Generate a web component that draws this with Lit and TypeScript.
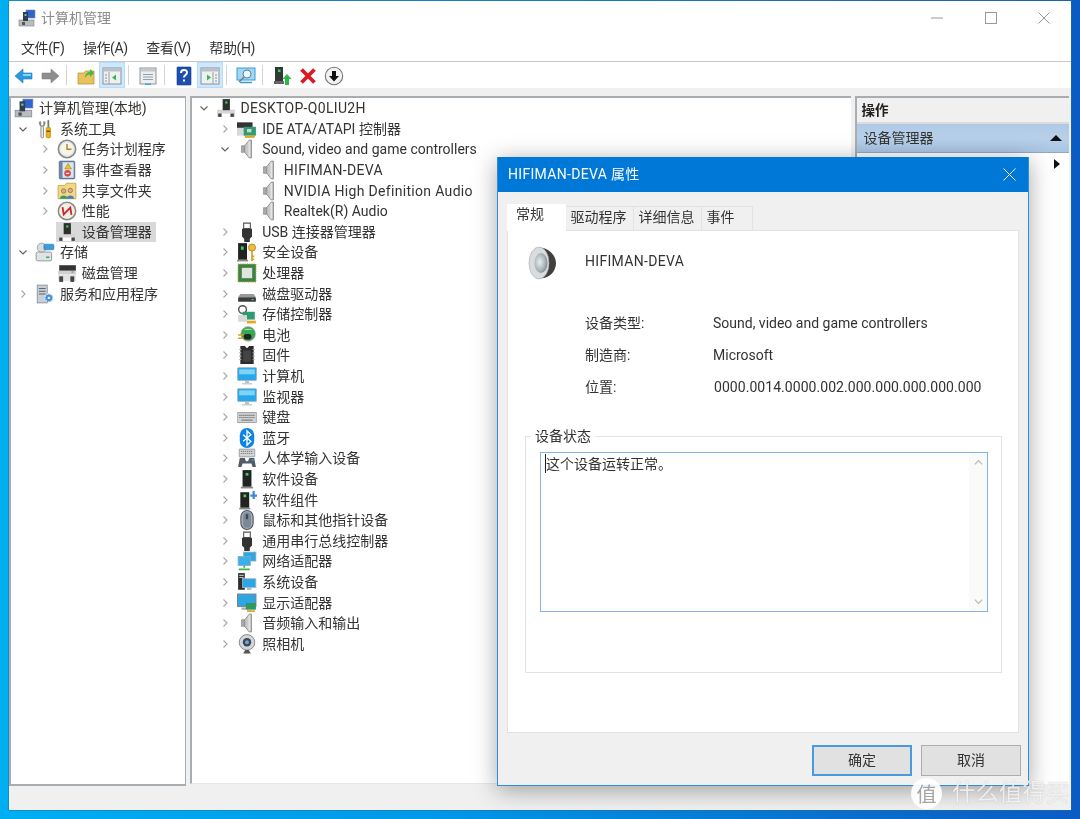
import { LitElement, html, css, svg, TemplateResult } from "lit";
import { customElement } from "lit/decorators.js";

const speaker = svg`<path d="M4 6h3v6H4z" fill="#a8a8a8" stroke="#8c8c8c" stroke-width=".6"/><path d="M7 6l4-5h2v16h-2l-4-5z" fill="#c9c9c9" stroke="#8a8a8a" stroke-width=".8"/><path d="M11 2v14" stroke="#efefef"/>`;
const tower = svg`<rect x="6" y="1" width="6.500" height="10" fill="#2f2f2f"/><rect x="8.300" y="3" width="2" height="2" fill="#38d060"/>`;
const screen = svg`<rect x="0.500" y="1.500" width="17" height="11.500" rx=".6" fill="#27a7e8" stroke="#9fb6c6" stroke-width=".8"/><rect x="2" y="3" width="14" height="4.500" fill="#7fd3f6"/><path d="M7.500 13.500h3l.5 2h-4z" fill="#b9c2c8"/><path d="M4.500 16h9" stroke="#c3c9cc" stroke-width="1.200"/>`;

const I: Record<string, TemplateResult> = {
  mgmt: svg`<rect x="1" y="11" width="15" height="6" fill="#b8bcc0" stroke="#7d8286" stroke-width=".6"/><rect x="4" y="13" width="3" height="3" fill="#555"/><rect x="8" y="1" width="9" height="8" fill="#2f63d0" stroke="#7a8aa0" stroke-width=".6"/><rect x="5" y="3" width="5" height="9" fill="#333c50"/><rect x="6.500" y="5" width="2" height="2" fill="#55d0a0"/>`,
  tools: svg`<path d="M5 2v3.500M8 2v3.500M4 2.500c0 3 1 4 2.500 4S9 5.500 9 2.500" fill="none" stroke="#8a8a8a" stroke-width="1.100"/><rect x="5.300" y="6.500" width="2.400" height="10.500" rx="1" fill="#e8e8e8" stroke="#777" stroke-width=".7"/><rect x="11.200" y="1" width="1.600" height="6.500" fill="#777"/><rect x="10" y="7.500" width="4" height="9.500" rx="1.400" fill="#efb010" stroke="#a07000" stroke-width=".5"/><path d="M10.500 11h3" stroke="#4a3a00"/>`,
  clock: svg`<circle cx="9" cy="9" r="7.800" fill="#e8e6da" stroke="#7f8a94" stroke-width="1.400"/><circle cx="9" cy="9" r="5.800" fill="#f8f5e6"/><path d="M9 4.500V9.300h4" fill="none" stroke="#a88a30" stroke-width="1.300"/>`,
  event: svg`<rect x="2" y="1" width="14" height="16" rx="1" fill="#6d86ad" stroke="#4b5f80" stroke-width=".6"/><rect x="5" y="2" width="10" height="14" fill="#dde5ee"/><path d="M10 3l3 5H7z" fill="#f0c020" stroke="#8a6a10" stroke-width=".4"/><circle cx="9.500" cy="12" r="3" fill="#d84a4a"/><path d="M8 12h3" stroke="#fff"/>`,
  share: svg`<path d="M1 4h6l1.500-2H17v14H1z" fill="#f3d884" stroke="#bf9c3e" stroke-width=".7"/><circle cx="6" cy="9" r="2" fill="#e2b080" stroke="#555" stroke-width=".5"/><path d="M2.500 16c0-4 7-4 7 0z" fill="#3c9a5a"/><circle cx="12" cy="8.500" r="2" fill="#e2b080" stroke="#555" stroke-width=".5"/><path d="M8.500 16c0-4 7-4 7 0z" fill="#4a7ec0"/>`,
  perf: svg`<circle cx="9" cy="9" r="7.800" fill="#f0efe6" stroke="#8a8a84" stroke-width="1.400"/><path d="M5 5.500l1 6.500 6-6 1 6.500" fill="none" stroke="#d02028" stroke-width="1.600"/>`,
  devmgr: svg`<path d="M1 10.500h16v6.500H1z" fill="#d6d6d6"/><path d="M4 17v-3h10v3" fill="#fff"/><rect x="2" y="14" width="3" height="3" fill="#444"/><rect x="13" y="14" width="3" height="3" fill="#444"/>${tower}`,
  storage: svg`<rect x="1" y="9" width="14" height="8" rx="1.500" fill="#dfe3e6" stroke="#7d858c" stroke-width=".7"/><rect x="10" y="13" width="3" height="1.500" fill="#40b060"/><circle cx="6" cy="5" r="4" fill="#d8dcdc" stroke="#808890" stroke-width=".6"/><rect x="8" y="2" width="9" height="5" rx="1" fill="#3d9ae0" stroke="#2b6ea0" stroke-width=".5"/>`,
  disk: svg`<rect x="2" y="2" width="15" height="5" fill="#333"/><path d="M1 7h16v3H1z" fill="#cfcfcf"/><path d="M1 10h16v6H1z" fill="#e3e3e3"/><rect x="2" y="12" width="3.500" height="5" fill="#444"/><rect x="12" y="12" width="3.500" height="5" fill="#444"/><rect x="13" y="7.500" width="2" height="1.200" fill="#40c060"/>`,
  services: svg`<rect x="2" y="1" width="9" height="16" fill="#c9cfd6" stroke="#7f8890" stroke-width=".7"/><path d="M3.500 4h6M3.500 6.500h6M3.500 9h6" stroke="#5a6670"/><circle cx="12.500" cy="12.500" r="3.600" fill="#4a90d0" stroke="#d5e6f5" stroke-width="1.200" stroke-dasharray="1.600 .8"/><circle cx="12.500" cy="12.500" r="1.100" fill="#eef"/>`,
  ide: svg`<path d="M0 3h14v5H0z" fill="#333"/><path d="M0 8h8v7H0z" fill="#d8d8d8"/><rect x="6" y="7" width="11" height="8" fill="#2f9a74"/><rect x="9" y="9" width="4" height="3" fill="#b8e0c8"/><path d="M7 15h9v2H7z" fill="#e0a820"/>`,
  speaker,
  usb: svg`<path d="M6 1h6v5H6z" fill="none" stroke="#555"/><path d="M4.500 6h9v7l-2 2v3h-5v-3l-2-2z" fill="#333"/>`,
  security: svg`<rect x="1" y="1" width="8" height="15" fill="#222"/><rect x="3.500" y="4" width="2.500" height="3" fill="#38d060"/><path d="M0 16h10v1.500H0z" fill="#888"/><circle cx="13.500" cy="5" r="3.200" fill="#efb93a" stroke="#a37c18" stroke-width=".7"/><path d="M13.500 8v9M13.500 13h2M13.500 15.500h2" stroke="#d69e20" stroke-width="1.500"/>`,
  cpu: svg`<rect x="1" y="1" width="16" height="16" fill="#2f8a3f"/><rect x="1" y="1" width="16" height="16" fill="none" stroke="#b08c28" stroke-width="1" stroke-dasharray="1 1"/><rect x="4" y="4" width="10" height="10" fill="#dfe6da" stroke="#666" stroke-width=".6"/>`,
  drive: svg`<path d="M3 9h12l2 3H1z" fill="#9a9a9a"/><rect x="1" y="12" width="16" height="4" rx=".8" fill="#3c3c3c"/><rect x="13" y="13.500" width="2" height="1" fill="#40d060"/>`,
  storctl: svg`<circle cx="5" cy="5" r="3.500" fill="none" stroke="#555" stroke-width="1.300"/><path d="M7 7l8 3" stroke="#555"/><rect x="5" y="7" width="11" height="7" fill="#2e9a70"/><rect x="1" y="10" width="8" height="6" fill="#d8d8d8"/><path d="M9 15h8v2.500H9z" fill="#e8a820"/>`,
  battery: svg`<circle cx="10" cy="8" r="6.500" fill="#34a853" stroke="#999" stroke-width=".7"/><path d="M6 4.500a5 3 0 018 0z" fill="#a8e0b0"/><rect x="6" y="8" width="7" height="5" rx="2.400" fill="#222"/><path d="M1 9h5M1 12h5" stroke="#d8a020" stroke-width="1.300"/>`,
  firmware: svg`<path d="M3 1h4l2 2 2-2h4v16H3z" fill="#2c2c2c"/><path d="M2 4h2M2 7h2M2 10h2M2 13h2M14 4h2M14 7h2M14 10h2M14 13h2" stroke="#aaa"/><rect x="5.500" y="5" width="7" height="10" fill="#444"/>`,
  computer: screen,
  monitor: screen,
  keyboard: svg`<rect x="0" y="5" width="18" height="9" rx="1" fill="#cfd2d4" stroke="#8c9094" stroke-width=".7"/><path d="M2 7.500h14M2 9.500h14" stroke="#777" stroke-dasharray="1.200 .6"/><path d="M4 11.800h10" stroke="#888" stroke-width="1.200"/>`,
  bt: svg`<rect x="2.500" y="0" width="13" height="18" rx="6.500" fill="#0a84e8"/><path d="M5.500 6l7 6-3.500 3.500v-13L12.500 6l-7 6" fill="none" stroke="#fff" stroke-width="1.200"/>`,
  hid: svg`<rect x="2" y="1" width="14" height="7" rx=".6" fill="#d2d4d6" stroke="#808488" stroke-width=".6"/><path d="M3.500 3h11M3.500 5h11" stroke="#888" stroke-dasharray="1.200 .6"/><path d="M1 17l1.500-8h4.500l1 3h2l1-3h4.500l1.500 8h-3l-1-3H5l-1 3z" fill="#515a66"/><circle cx="14" cy="11" r="1" fill="#3a8ad8"/>`,
  softdev: svg`<rect x="5" y="1" width="8" height="15" fill="#222"/><rect x="7.800" y="3.500" width="2.500" height="2.500" fill="#38d060"/><path d="M3.500 16h11v1.500h-11z" fill="#888"/>`,
  softcomp: svg`<rect x="3" y="2" width="8" height="14" fill="#222"/><rect x="5.800" y="4" width="2.500" height="2.500" fill="#38d060"/><path d="M2 16h10v1.500H2z" fill="#888"/><path d="M12 4h2V1h2v3h2v2h-2v2h-2V6h-2z" fill="#3a8ad8"/>`,
  mouse: svg`<rect x="3.500" y="0.500" width="11" height="17" rx="5.500" fill="#a5aeb8" stroke="#4d5560" stroke-width="1"/><rect x="5.500" y="2" width="7" height="14" rx="3.500" fill="#7d8896"/><rect x="8" y="3.500" width="2" height="5" rx="1" fill="#3c4654"/>`,
  net: svg`<rect x="6" y="1" width="11" height="8" fill="#2ea6e6" stroke="#8fa8b8" stroke-width=".7"/><rect x="1" y="5" width="11" height="8" fill="#36b0ee" stroke="#8fa8b8" stroke-width=".7"/><path d="M6.500 13v2M1.500 16.500h10" stroke="#45b14e" stroke-width="1.600"/>`,
  sysdev: svg`<rect x="1" y="1" width="6" height="15" fill="#2d2d2d"/><path d="M2 3h4M2 5h4" stroke="#bbb"/><rect x="5" y="6" width="12" height="8" fill="#2ea6e6" stroke="#a0bccc" stroke-width=".7"/><path d="M9 14.500h4v1.500H9z" fill="#aaa"/>`,
  display: svg`<rect x="0.500" y="1" width="16.500" height="11" fill="#2ea6e6" stroke="#6d8494" stroke-width="1"/><path d="M4 13h5v2H4z" fill="#aaa"/><rect x="8" y="9" width="9" height="6" fill="#2e9a60"/><path d="M9 15.500h7v1.500H9z" fill="#d8a020"/>`,
  camera: svg`<circle cx="9" cy="7.500" r="7" fill="#d4d6d8" stroke="#7b7f84" stroke-width=".8"/><circle cx="9" cy="7.500" r="3.800" fill="#3a4658"/><circle cx="9" cy="7.500" r="1.800" fill="#7aa0d0"/><path d="M7.500 14.500h3l2 3h-7z" fill="#555"/>`,
};

const ico = (n: string) => html`<svg class="ic" viewBox="0 0 18 18">${I[n]}</svg>`;

type Row = { t: string; i: string; l: number; c?: "r" | "d"; sel?: boolean; wide?: boolean };

const LEFT: Row[] = [
  { t: "计算机管理(本地)", i: "mgmt", l: -1 },
  { t: "系统工具", i: "tools", l: 0, c: "d" },
  { t: "任务计划程序", i: "clock", l: 1, c: "r" },
  { t: "事件查看器", i: "event", l: 1, c: "r" },
  { t: "共享文件夹", i: "share", l: 1, c: "r" },
  { t: "性能", i: "perf", l: 1, c: "r" },
  { t: "设备管理器", i: "devmgr", l: 1, sel: true },
  { t: "存储", i: "storage", l: 0, c: "d" },
  { t: "磁盘管理", i: "disk", l: 1 },
  { t: "服务和应用程序", i: "services", l: 0, c: "r" },
];

const MID: Row[] = [
  { t: "DESKTOP-Q0LIU2H", i: "devmgr", l: 0, c: "d", wide: true },
  { t: "IDE ATA/ATAPI 控制器", i: "ide", l: 1, c: "r" },
  { t: "Sound, video and game controllers", i: "speaker", l: 1, c: "d" },
  { t: "HIFIMAN-DEVA", i: "speaker", l: 2, wide: true },
  { t: "NVIDIA High Definition Audio", i: "speaker", l: 2, wide: true },
  { t: "Realtek(R) Audio", i: "speaker", l: 2 },
  { t: "USB 连接器管理器", i: "usb", l: 1, c: "r" },
  { t: "安全设备", i: "security", l: 1, c: "r" },
  { t: "处理器", i: "cpu", l: 1, c: "r" },
  { t: "磁盘驱动器", i: "drive", l: 1, c: "r" },
  { t: "存储控制器", i: "storctl", l: 1, c: "r" },
  { t: "电池", i: "battery", l: 1, c: "r" },
  { t: "固件", i: "firmware", l: 1, c: "r" },
  { t: "计算机", i: "computer", l: 1, c: "r" },
  { t: "监视器", i: "monitor", l: 1, c: "r" },
  { t: "键盘", i: "keyboard", l: 1, c: "r" },
  { t: "蓝牙", i: "bt", l: 1, c: "r" },
  { t: "人体学输入设备", i: "hid", l: 1, c: "r" },
  { t: "软件设备", i: "softdev", l: 1, c: "r" },
  { t: "软件组件", i: "softcomp", l: 1, c: "r" },
  { t: "鼠标和其他指针设备", i: "mouse", l: 1, c: "r" },
  { t: "通用串行总线控制器", i: "usb", l: 1, c: "r" },
  { t: "网络适配器", i: "net", l: 1, c: "r" },
  { t: "系统设备", i: "sysdev", l: 1, c: "r" },
  { t: "显示适配器", i: "display", l: 1, c: "r" },
  { t: "音频输入和输出", i: "speaker", l: 1, c: "r" },
  { t: "照相机", i: "camera", l: 1, c: "r" },
];

const chevron = (c?: "r" | "d") =>
  html`<span class="chev">${c === "r"
    ? html`<svg viewBox="0 0 10 10"><path d="M3.500 1.500L7 5 3.500 8.500" fill="none" stroke="#a6a6a6" stroke-width="1.100"/></svg>`
    : c === "d"
    ? html`<svg viewBox="0 0 10 10"><path d="M1.500 3.500L5 7l3.500-3.500" fill="none" stroke="#606060" stroke-width="1.100"/></svg>`
    : ""}</span>`;

const tool = (n: TemplateResult, hl = false) =>
  html`<span class="tb ${hl ? "hl" : ""}"><svg viewBox="0 0 20 20">${n}</svg></span>`;

const paneIcon = (fill: string, left: boolean) => svg`<rect x="1" y="2" width="18" height="16" fill="#eef1f3" stroke="#8a9096"/><rect x="1.500" y="2.500" width="17" height="3" fill="#b9c0c6"/><path d="${left ? "M7 6v12" : "M13 6v12"}" stroke="#9aa0a6"/><path d="${left ? "M3 9h2M3 12h2M3 15h2" : "M15 9h2M15 12h2M15 15h2"}" stroke="#8a9096"/><path d="${left ? "M14 8.500v6l-4-3z" : "M7 8.500v6l4-3z"}" fill="${fill}"/>`;

@customElement("app-root")
export class AppRoot extends LitElement {
  static styles = css`
    :host {
      display: block;
      position: relative;
      width: 1080px;
      height: 819px;
      overflow: hidden;
      padding: 1px 9px 9px;
      box-sizing: border-box;
      background: linear-gradient(90deg, #00aff2 0%, #0098e8 40%, #0a6ecb 80%, #0a5cc4 100%);
      font: 14px/20px Roboto, "Noto Sans CJK SC", sans-serif;
      color: #333;
      filter: blur(0.4px);
    }
    .win {
      position: relative;
      height: 100%;
      background: #f0f0f0;
      display: flex;
      flex-direction: column;
      box-shadow: 0 0 0 0.5px #2b6a9c;
    }
    .title {
      height: 35px;
      flex: none;
      background: #fff;
      display: flex;
      align-items: center;
      padding: 0 0 2px 9px;
      box-sizing: border-box;
      color: #8c8c8c;
      gap: 5px;
    }
    .title .ic { width: 18px; height: 18px; }
    .spacer { flex: 1; }
    .ctls { display: flex; margin-top: 1px; }
    .ctl { width: 53.500px; height: 30px; display: flex; align-items: center; justify-content: center; }
    .ctl svg { width: 12px; height: 12px; }
    .menu {
      flex: none;
      background: #fff;
      display: flex;
      padding: 0 0 2px 12px;
      box-sizing: content-box;
      height: 23px;
      gap: 18.500px;
      letter-spacing: -0.4px;
      align-items: center;
      border-bottom: 1.500px solid #c8c8c8;
      color: #333;
    }
    .toolbar {
      height: 26px;
      flex: none;
      background: #fff;
      display: flex;
      padding-left: 2px;
    }
    .tb { width: 26px; height: 26px; display: flex; align-items: center; justify-content: center; box-sizing: border-box; }
    .tb svg { width: 20px; height: 20px; margin-top: 1px; }
    .tb.hl { background: #cce8ff; border: 1px solid #b5dcfb; }
    .sep { width: 10px; flex: none; display: flex; }
    .sep::before { content: ""; width: 1px; height: 20px; margin: 3px 0 0 3px; background: #d4d4d4; }
    .strip { height: 8px; flex: none; background: #f0f0f0; }
    .panes { flex: 1; min-height: 0; display: flex; background: #f0f0f0; }
    .pane { background: #fff; border: 2px solid #a8adb2; overflow: hidden; box-sizing: border-box; }
    .pane.l { width: 176.500px; border-right-width: 1.500px; }
    .pane.m { width: 661px; margin-left: 4px; border-right: 0; border-bottom: 1px solid #e6e6e6; margin-bottom: 1.500px; }
    .pane.r { flex: 1; margin-left: 4px; border-right: 0; border-bottom: 0; margin-right: 2px; margin-bottom: 1.500px; }
    .row { height: 20.600px; display: flex; align-items: center; white-space: nowrap; }
    .wide { letter-spacing: 0.32px; }
    .chev { width: 12px; height: 12px; margin-right: 6px; flex: none; display: flex; align-items: center; justify-content: center; }
    .chev svg { width: 10px; height: 10px; }
    .cell { display: flex; align-items: center; gap: 5px; height: 20px; padding-right: 4px; margin-left: -1px; padding-left: 1px; }
    .cell.sel { background: #d9d9d9; }
    .ic { width: 20px; height: 20px; flex: none; }
    .pl0 { padding-left: 6px; }
    .pl1 { padding-left: 27.700px; }
    .pl2 { padding-left: 49.300px; }
    .root { padding-left: 3px; }
    .root .cell { margin: 0; padding: 0; }
    .ac-h { font-weight: 700; padding-left: 5px; display: flex; align-items: center; background: #f0f0f0; border-bottom: 2px solid #dcdcdc; color: #222; box-sizing: border-box; height: 26px; font-size: 13.500px; }
    .ac-t { height: 29px; display: flex; align-items: center; justify-content: space-between; padding: 0 5px 0 7px; background: linear-gradient(#afc9e5, #b8d0e9 50%, #a9c5e3); color: #333; border-bottom: 1px solid #8fa9c4; box-sizing: border-box; }
    .up { width: 0; height: 0; border: 6px solid transparent; border-top: 0; border-bottom: 6px solid #111; margin-right: 2px; }
    .ac-r { height: 22px; display: flex; align-items: center; justify-content: flex-end; padding-right: 9px; }
    .rt { width: 0; height: 0; border: 5px solid transparent; border-right: 0; border-left: 6px solid #111; }
    .status { height: 24.500px; flex: none; background: #f0f0f0; }
    .dlg {
      position: absolute;
      left: 488px;
      top: 155.500px;
      width: 532px;
      height: 629px;
      box-sizing: border-box;
      background: #f0f0f0;
      border: 1px solid #2f8ddc;
      border-top: 0;
      box-shadow: 0 4px 22px rgba(0, 0, 0, 0.35);
      display: flex;
      flex-direction: column;
    }
    .d-title { height: 35px; flex: none; background: #0078d7; color: #fff; display: flex; align-items: center; padding: 0 12px 0 10px; justify-content: space-between; }
    .d-title svg { width: 13px; height: 13px; }
    .tabs { display: flex; margin: 12px 0 0 9px; height: 26px; align-items: flex-end; white-space: nowrap; }
    .tab { height: 24px; display: flex; align-items: center; border: 1px solid #e2e2e2; border-bottom: 0; border-left: 0; box-sizing: border-box; width: 68px; padding: 0 0 2px 4.500px; }
    .tab.on { height: 27px; width: 59px; background: #fff; padding: 0 0 6px 9px; border: 0; margin-bottom: -1px; position: relative; }
    .tab.ev { width: 51px; }
    .d-body { margin: 0 9px; height: 503px; flex: none; background: #fff; border: 1px solid #e2e2e2; box-sizing: border-box; padding: 15px 17px 0; }
    .d-head { display: flex; height: 30px; align-items: center; gap: 27px; padding-left: 3px; }
    .d-head svg { width: 30px; height: 36px; margin-top: 4px; flex: none; }
    .grid { display: grid; grid-template-columns: 128px 1fr; row-gap: 12px; margin: 37px 0 0 60px; }
    .grid span:nth-child(6) { padding-left: 1px; letter-spacing: 0.05px; }
    .group { margin-top: 39px; width: 477px; height: 237px; box-sizing: border-box; border: 1px solid #e2e2e2; padding: 0 13px 0 14px; }
    .legend { margin: -11px 0 0 -9px; width: fit-content; padding: 0 4px; background: #fff; height: 20px; }
    .ta { margin-top: 6px; height: 160px; box-sizing: border-box; border: 1px solid #83b5e6; padding: 1px 4px; display: flex; justify-content: space-between; }
    .txt { border-left: 1px solid #222; height: 19px; padding-left: 0; line-height: 20px; }
    .sb { width: 18px; margin: -1px -4px -1px 0; display: flex; flex-direction: column; justify-content: space-between; align-items: center; padding: 5px 0; box-sizing: border-box; background: #fafafa; }
    .sb svg { width: 9px; height: 9px; }
    .btns { display: flex; gap: 9px; justify-content: flex-end; margin: 12px 7px 0 0; }
    .btn { width: 100px; height: 31px; box-sizing: border-box; background: #e1e1e1; border: 1px solid #adadad; display: flex; align-items: center; justify-content: center; }
    .btn.def { border: 2px solid #4a9ae0; }
    .wm { position: absolute; left: 911px; top: 777px; display: flex; align-items: center; gap: 10px; color: rgba(255, 255, 255, 0.8); font-size: 23.500px; line-height: 32px; text-shadow: 0 0 1px rgba(120, 120, 120, 0.5); }
    .wm i { width: 31px; height: 31px; border-radius: 50%; background: rgba(255, 255, 255, 0.92); color: #a5a5a5; font: 20px/31px "Noto Sans CJK SC", sans-serif; text-align: center; text-shadow: none; }
  `;

  row(r: Row) {
    if (r.l < 0)
      return html`<div class="row root"><span class="cell">${ico(r.i)}<span>${r.t}</span></span></div>`;
    return html`<div class="row pl${r.l}">${chevron(r.c)}<span class="cell ${r.sel ? "sel" : ""}">${ico(r.i)}<span class="${r.wide ? "wide" : ""}">${r.t}</span></span></div>`;
  }

  render() {
    return html`
      <div class="win">
        <div class="title">
          ${ico("mgmt")}<span>计算机管理</span><span class="spacer"></span>
          <span class="ctls">
            <span class="ctl"><svg viewBox="0 0 12 12"><path d="M0 6h12" stroke="#aaa" stroke-width="1.200"/></svg></span>
            <span class="ctl"><svg viewBox="0 0 12 12"><rect x=".5" y=".5" width="11" height="11" fill="none" stroke="#999" stroke-width="1"/></svg></span>
            <span class="ctl"><svg viewBox="0 0 12 12"><path d="M.5.5l11 11M11.500.5l-11 11" stroke="#999" stroke-width="1"/></svg></span>
          </span>
        </div>
        <div class="menu"><span>文件(F)</span><span>操作(A)</span><span>查看(V)</span><span>帮助(H)</span></div>
        <div class="toolbar">
          ${tool(svg`<path d="M1 10l8-7v4h9v6H9v4z" fill="#2a9ae0" stroke="#1d78b8" stroke-width=".6"/><path d="M9 8h8v2H9z" fill="#8cd0f4"/>`)}
          ${tool(svg`<path d="M19 10l-8-7v4H2v6h9v4z" fill="#8e8e8e" stroke="#777" stroke-width=".5"/>`)}
          <span class="sep"></span>
          ${tool(svg`<path d="M2 7h6l1.500-2H18v13H2z" fill="#e8c25a" stroke="#b08e30" stroke-width=".7"/><path d="M9 12c0-5 3-6 5-6V3l4 4-4 4V8.500c-2 0-4 1-5 3.500z" fill="#46b648"/>`)}
          ${tool(paneIcon("#3db54a", true), true)}
          <span class="sep"></span>
          ${tool(svg`<rect x="2" y="2" width="16" height="16" fill="#eceef0" stroke="#8d9398"/><rect x="3" y="3" width="14" height="2.500" fill="#c2c8cc"/><path d="M5 8.500h10M5 11h10M5 13.500h10" stroke="#8fa2b0"/><path d="M7 17.500h6v1.500H7z" fill="#3ca6e4"/>`)}
          <span class="sep"></span>
          <span class="tb"><svg viewBox="0 0 20 20"><rect x="3" y="1" width="14" height="18" rx=".6" fill="#1d4fb0" stroke="#123a80" stroke-width=".6"/><path d="M7 7c0-4 6-4 6-.5 0 2.500-3 2.500-3 5M10 13.500v2" fill="none" stroke="#fff" stroke-width="2"/></svg></span>
          ${tool(paneIcon("#3db54a", false), true)}
          <span class="sep"></span>
          ${tool(svg`<rect x="1" y="2" width="18" height="12" fill="#9fd8f4" stroke="#3a9ad8"/><circle cx="11" cy="8" r="4" fill="#e8f6fd" stroke="#6a7f8e"/><path d="M8 11l-5 5" stroke="#6a7f8e" stroke-width="1.600"/><path d="M4 16.500h12" stroke="#3a9ad8" stroke-width="1.500"/>`)}
          <span class="sep"></span>
          ${tool(svg`<rect x="3" y="1" width="8" height="14" fill="#2f3a36"/><rect x="6" y="3.500" width="2.500" height="2.500" fill="#38d060"/><path d="M2 15h10v3H2z" fill="#666"/><path d="M15 8l4.500 5H17v6h-4v-6h-2.500z" fill="#2eb84a"/>`)}
          ${tool(svg`<path d="M3.500 3.500l13 13M16.500 3.500l-13 13" stroke="#dc1a22" stroke-width="3.800"/>`)}
          ${tool(svg`<circle cx="10" cy="10" r="8.700" fill="#f2f2f2" stroke="#777" stroke-width="1.100"/><path d="M10 15.500L5 10h3V5h4v5h3z" fill="#111"/>`)}
        </div>
        <div class="strip"></div>
        <div class="panes">
          <div class="pane l">${LEFT.map((r) => this.row(r))}</div>
          <div class="pane m">${MID.map((r) => this.row(r))}</div>
          <div class="pane r">
            <div class="ac-h">操作</div>
            <div class="ac-t"><span>设备管理器</span><span class="up"></span></div>
            <div class="ac-r"><span class="rt"></span></div>
          </div>
        </div>
        <div class="status"></div>
        <div class="dlg">
          <div class="d-title">
            <span class="wide">HIFIMAN-DEVA 属性</span>
            <svg viewBox="0 0 13 13"><path d="M.5.5l12 12M12.500.5l-12 12" stroke="#fff" stroke-width="1"/></svg>
          </div>
          <div class="tabs">
            <span class="tab on">常规</span><span class="tab">驱动程序</span><span class="tab">详细信息</span><span class="tab ev">事件</span>
          </div>
          <div class="d-body">
            <div class="d-head">
              <svg viewBox="0 0 30 36"><defs><radialGradient id="c" cx=".4" cy=".45" r=".7"><stop offset="0" stop-color="#e6edf0"/><stop offset=".6" stop-color="#a8b4ba"/><stop offset="1" stop-color="#70787c"/></radialGradient></defs><path d="M10 3c8-2 18 6 18 15s-8 17-18 15c-4-1-8-6-8-15S5 4 10 3z" fill="#3f3f3f"/><ellipse cx="11" cy="18" rx="10" ry="16" fill="#d8dcde" stroke="#a8a8a8" stroke-width=".6"/><ellipse cx="13" cy="18" rx="6.500" ry="10" fill="url(#c)"/></svg>
              <span class="wide">HIFIMAN-DEVA</span>
            </div>
            <div class="grid">
              <span>设备类型:</span><span>Sound, video and game controllers</span>
              <span>制造商:</span><span>Microsoft</span>
              <span>位置:</span><span>0000.0014.0000.002.000.000.000.000.000</span>
            </div>
            <div class="group">
              <div class="legend">设备状态</div>
              <div class="ta">
                <span class="txt">这个设备运转正常。</span>
                <span class="sb">
                  <svg viewBox="0 0 10 10"><path d="M1 7l4-4 4 4" fill="none" stroke="#b8b8b8" stroke-width="1.300"/></svg>
                  <svg viewBox="0 0 10 10"><path d="M1 3l4 4 4-4" fill="none" stroke="#b8b8b8" stroke-width="1.300"/></svg>
                </span>
              </div>
            </div>
          </div>
          <div class="btns"><span class="btn def">确定</span><span class="btn">取消</span></div>
        </div>
      </div>
      <div class="wm"><i>值</i><span>什么值得买</span></div>
    `;
  }
}
